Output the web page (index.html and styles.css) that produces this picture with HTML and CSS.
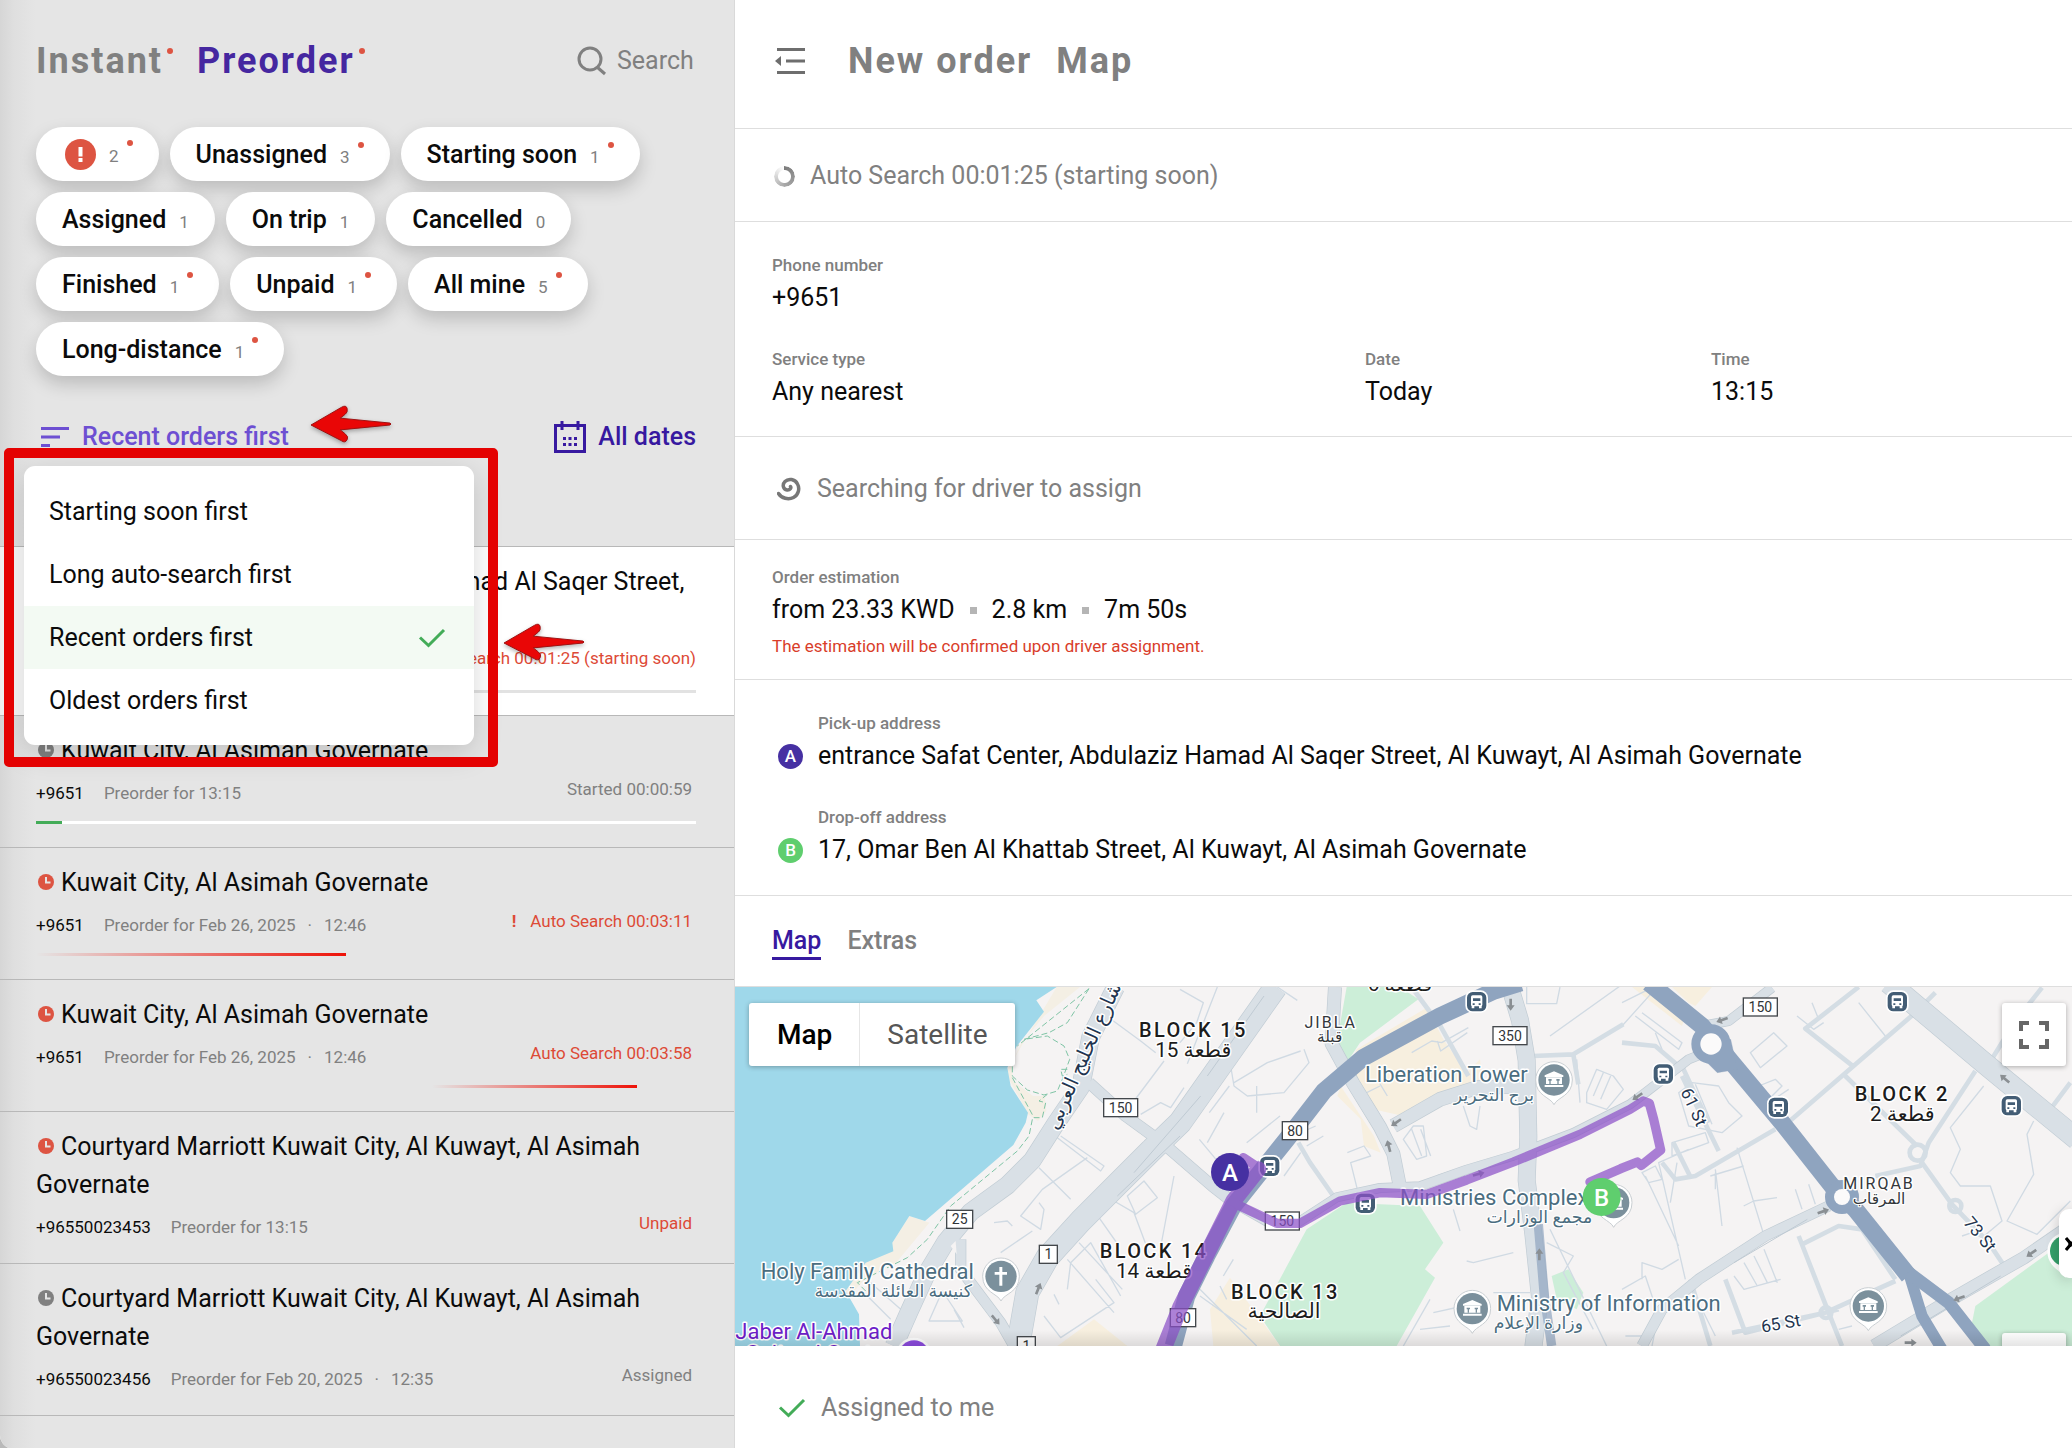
FILE: index.html
```html
<!DOCTYPE html>
<html lang="en">
<head>
<meta charset="utf-8">
<meta name="viewport" content="width=device-width, initial-scale=1">
<title>Preorder dispatch</title>
<link rel="stylesheet" href="styles.css">
</head>
<body>
<svg class="defs" width="0" height="0" aria-hidden="true">
  <symbol id="clock" viewBox="0 0 18 18">
    <circle cx="9" cy="9" r="8" fill="currentColor"/>
    <path d="M9 4v5.5h4.5" fill="none" stroke="#e5e5e5" stroke-width="2"/>
  </symbol>
  <symbol id="check" viewBox="0 0 28 20">
    <path d="M2 9.500l8.500 8L26 2" fill="none" stroke="#43ac58" stroke-width="3"/>
  </symbol>
  <symbol id="arrow" viewBox="0 0 82 40">
    <path d="M0 20L31 2q5-3 6 1 1 4-2 6l-5 4 51 5q2 1 0 2l-51 5 5 4q4 3 2 6-2 4-6 1z" fill="#e90606" stroke="#9c1010" stroke-width="1"/>
  </symbol>
  <symbol id="bus" viewBox="-36 -36 72 72">
    <rect x="-34" y="-34" width="68" height="68" rx="22" fill="#fff"/>
    <rect x="-29" y="-29" width="58" height="58" rx="17" fill="#435d75"/>
    <rect x="-17" y="-19" width="34" height="33" rx="5" fill="#fff"/>
    <path d="M-11-10h22v8h-22zM-12 5h6v5h-6zM6 5h6v5H6z" fill="#435d75"/>
    <path d="M-15 12h8v8h-8zM7 12h8v8H7z" fill="#fff"/>
  </symbol>
  <symbol id="pin" viewBox="-58 -58 116 136">
    <path d="M0 74C-9 52-55 48-55 0a55 55 0 01110 0C55 48 9 52 0 74z" fill="#fff" stroke="#c9ced2" stroke-width="3"/>
    <circle r="47" fill="#7b909c"/>
  </symbol>
  <symbol id="hall" viewBox="-32 -32 64 64">
    <path d="M0-26l28 12v5h-56v-5zM-24-8h48v20h-48zM-28 15h56v6h-56z" fill="#fff"/>
    <path d="M-17-3h10v5h-3v10h-4V2h-3zM7-3h10v5h-3v10h-4V2H7z" fill="#7b909c"/>
  </symbol>
  <symbol id="oneway" viewBox="-20 -20 40 40">
    <path d="M-18-4H2v-8L18 0 2 12V4h-20z" fill="#8a8f93"/>
  </symbol>
</svg>

<div class="app">
  <aside class="sidebar">
    <header class="side-head">
      <nav class="heading-tabs">
        <a class="heading" href="#instant">Instant</a><i class="dot"></i>
        <a class="heading active" href="#preorder">Preorder</a><i class="dot"></i>
      </nav>
      <label class="search">
        <svg width="30" height="30" viewBox="0 0 30 30" aria-hidden="true"><circle cx="13" cy="13" r="11" fill="none" stroke="#808080" stroke-width="3"/><path d="M20 21l8 7" stroke="#808080" stroke-width="3"/></svg>
        <input type="text" placeholder="Search" aria-label="Search">
      </label>
    </header>

    <div class="chips">
      <button class="chip alert"><svg width="31" height="31" viewBox="0 0 31 31" role="img" aria-label="Problems"><circle cx="15.500" cy="15.500" r="15.500" fill="#dd5442"/><path d="M13.500 8h4v9.500h-4zM13.500 19h4v4h-4z" fill="#fff"/></svg><small>2</small><i class="dot"></i></button>
      <button class="chip">Unassigned<small>3</small><i class="dot"></i></button>
      <button class="chip">Starting soon<small>1</small><i class="dot"></i></button>
      <button class="chip">Assigned<small>1</small></button>
      <button class="chip">On trip<small>1</small></button>
      <button class="chip">Cancelled<small>0</small></button>
      <button class="chip">Finished<small>1</small><i class="dot"></i></button>
      <button class="chip">Unpaid<small>1</small><i class="dot"></i></button>
      <button class="chip">All mine<small>5</small><i class="dot"></i></button>
      <button class="chip">Long-distance<small>1</small><i class="dot"></i></button>
    </div>

    <div class="sort-row">
      <button class="sort" aria-haspopup="listbox" aria-expanded="true">
        <svg width="28" height="20" viewBox="0 0 28 20" aria-hidden="true"><path d="M0 1.500h28M0 10h19M0 18.500h9" stroke="#6d4fd2" stroke-width="3"/></svg>
        Recent orders first
      </button>
      <button class="dates">
        <svg width="32" height="32" viewBox="0 0 32 32" aria-hidden="true"><rect x="1.500" y="4.500" width="29" height="26" fill="none" stroke="#3719a0" stroke-width="3"/><path d="M8 0v9M24 0v9" stroke="#3719a0" stroke-width="3"/><path d="M9 16h3v3H9zM14.500 16h3v3h-3zM20 16h3v3h-3zM9 22h3v3H9zM14.500 22h3v3h-3zM20 22h3v3h-3z" fill="#3719a0"/></svg>
        All dates
      </button>
      <div class="menu" role="listbox" aria-label="Sort orders">
        <button class="option" role="option">Starting soon first</button>
        <button class="option" role="option">Long auto-search first</button>
        <button class="option chosen" role="option" aria-selected="true">Recent orders first<svg width="28" height="20" aria-hidden="true"><use href="#check"/></svg></button>
        <button class="option" role="option">Oldest orders first</button>
      </div>
      <div class="callout-box"></div>
      <svg class="callout-arrow to-sort" width="80" height="40" aria-hidden="true"><use href="#arrow"/></svg>
      <svg class="callout-arrow to-menu" width="80" height="40" aria-hidden="true"><use href="#arrow"/></svg>
    </div>

    <ul class="orders">
      <li class="order current">
        <h3 class="order-title"><svg class="clock" width="18" height="18"><use href="#clock"/></svg>entrance Safat Center, Abdulaziz Hamad Al Saqer Street, Al Kuwayt, Al Asimah Governate</h3>
        <div class="meta"><b>+9651</b><span>Preorder for 13:15</span><em class="status late flush">Auto Search 00:01:25 (starting soon)</em></div>
        <div class="bar"></div>
      </li>
      <li class="order">
        <h3 class="order-title"><svg class="clock" width="18" height="18"><use href="#clock"/></svg>Kuwait City, Al Asimah Governate</h3>
        <div class="meta"><b>+9651</b><span>Preorder for 13:15</span><em class="status">Started 00:00:59</em></div>
        <div class="bar light"><div class="fill" style="width:4%"></div></div>
      </li>
      <li class="order">
        <h3 class="order-title"><svg class="clock late" width="18" height="18"><use href="#clock"/></svg>Kuwait City, Al Asimah Governate</h3>
        <div class="meta"><b>+9651</b><span class="when"><span>Preorder for Feb 26, 2025</span><span>·</span><span>12:46</span></span><em class="status late"><strong>!</strong>Auto Search 00:03:11</em></div>
        <div class="bar clear"><div class="sweep" style="width:47%"></div></div>
      </li>
      <li class="order">
        <h3 class="order-title"><svg class="clock late" width="18" height="18"><use href="#clock"/></svg>Kuwait City, Al Asimah Governate</h3>
        <div class="meta"><b>+9651</b><span class="when"><span>Preorder for Feb 26, 2025</span><span>·</span><span>12:46</span></span><em class="status late">Auto Search 00:03:58</em></div>
        <div class="bar clear"><div class="sweep" style="width:31%;margin-left:60%"></div></div>
      </li>
      <li class="order">
        <h3 class="order-title"><svg class="clock late" width="18" height="18"><use href="#clock"/></svg>Courtyard Marriott Kuwait City, Al Kuwayt, Al Asimah Governate</h3>
        <div class="meta"><b>+96550023453</b><span>Preorder for 13:15</span><em class="status late">Unpaid</em></div>
      </li>
      <li class="order">
        <h3 class="order-title"><svg class="clock" width="18" height="18"><use href="#clock"/></svg>Courtyard Marriott Kuwait City, Al Kuwayt, Al Asimah Governate</h3>
        <div class="meta"><b>+96550023456</b><span class="when"><span>Preorder for Feb 20, 2025</span><span>·</span><span>12:35</span></span><em class="status">Assigned</em></div>
      </li>
    </ul>
  </aside>

  <main class="detail">
    <header class="detail-head">
      <button class="collapse" aria-label="Collapse panel"><svg width="30" height="26" viewBox="0 0 30 26"><path d="M2 1.500h28M11 13h19M2 24.500h28" stroke="#6e6e6e" stroke-width="3"/><path d="M0 13l6-5v10z" fill="#6e6e6e"/></svg></button>
      <nav class="detail-tabs">
        <a class="heading" href="#new-order">New order</a>
        <a class="heading" href="#map-view">Map</a>
      </nav>
    </header>

    <section class="notice">
      <span class="spinner"></span>
      Auto Search 00:01:25 (starting soon)
    </section>

    <section class="fields">
      <dl class="field wide"><dt>Phone number</dt><dd>+9651</dd></dl>
      <dl class="field"><dt>Service type</dt><dd>Any nearest</dd></dl>
      <dl class="field"><dt>Date</dt><dd>Today</dd></dl>
      <dl class="field"><dt>Time</dt><dd>13:15</dd></dl>
    </section>

    <section class="searching">
      <svg width="24" height="24" viewBox="0 0 24 24" aria-hidden="true"><path d="M1.500 16.500c3 5 10 6.500 15 4 5-2.500 6.500-9 4-13.500-2.500-5-9-6-12.500-2.500-3 3-2 8 2 8.500 3 .4 4.500-2 3.500-3.500" fill="none" stroke="#777" stroke-width="3.500" stroke-linecap="round"/></svg>
      Searching for driver to assign
    </section>

    <section class="estimate">
      <h4 class="label">Order estimation</h4>
      <p class="facts"><span>from 23.33 KWD</span><i class="square"></i><span>2.8 km</span><i class="square"></i><span>7m 50s</span></p>
      <p class="note">The estimation will be confirmed upon driver assignment.</p>
    </section>

    <section class="stops">
      <div class="stop"><h4 class="label">Pick-up address</h4><span class="badge a">A</span><p>entrance Safat Center, Abdulaziz Hamad Al Saqer Street, Al Kuwayt, Al Asimah Governate</p></div>
      <div class="stop"><h4 class="label">Drop-off address</h4><span class="badge b">B</span><p>17, Omar Ben Al Khattab Street, Al Kuwayt, Al Asimah Governate</p></div>
    </section>

    <nav class="tabs">
      <a class="tab on" href="#map">Map</a>
      <a class="tab" href="#extras">Extras</a>
    </nav>

    <section class="map" id="map">
      <svg class="canvas" viewBox="0 0 4011 1077" preserveAspectRatio="xMidYMid slice" role="img" aria-label="Route map">
        <rect width="4011" height="1077" fill="#f5f3f3"/>
        <g transform="translate(-3 -33)">
          <!-- water and sand -->
          <path class="sand" d="M968 33h70L930 120 860 205l-28 60 5 50 60 45 35 0 5 45-25 30-30-20L815 290zM475 800l51-80 60 20-100 120-90 45-40 45-40 10 20-70z"/>
          <path class="water" d="M0 33H968L907 73 930 107 847 212 820 275 830 330 882 410 875 440 838 507 573 735 526 720 475 800 478 826 395 860 335 945 375 1015 378 1110H0z"/>
          <!-- blocks -->
          <path class="park" d="M1838 33h160l55 37-175 130-40 60-30-60 20-110zM1718 760l120-80 220 10 70 110-55 80 30 25-115 205h-350l-60-90 70-130zM4014 790l-70 40-220 160-10 50 50 70h250zM2453 900l50-20 45 70-20 50-60-30z"/>
          <path class="beige" d="M1868 220l210-125 50 95 70 100 40-40 10 80-150 40-110 100 20-50-90-20-80-100zM1820 330l100 150 20 50-50-20-10-80-70-70zM1438 1110l-10-110 60-95 150 205zM2694 33h45l115 87-10 30zM2814 33h120l-50 57-20-10zM970 1110l110-80 100 80z"/>
          <!-- minor streets -->
          <g class="lane">
            <path d="M980 480l130 90-10 15-130-100M915 575l95 95M1060 545L925 640 860 720l60 40 10-60-15-20M780 740l40-5 15 15M800 830l95-65M1125 125l95 70 45 35M1290 255l-90 120M1320 600l-45 240M1180 660l50-45 40 50-65 50zM1140 675l60 35 45 120M1095 725l60 85M1035 800l130 140M1000 850l140 160M930 1020l50 65 160-105-55-70M960 955l15 30M585 1035h100l-60-90zM660 1000l30 55M400 960l70 70M410 920l90 80M1220 415l60-35 30 15 40-60M1000 940l10-80 60-60 90 160"/>
            <path d="M1338 40l70 40-20 60-50 60M1450 33l-90 230M1630 33l60 40M1710 220l15 40-75 90-110 10-40-30-10-60M1500 320l100-60 100-35M1426 410l60-80M1568 330v80M1470 410l-50 90M1396 490l50 60M1538 500l100-80M1718 510l50-30M1650 600l50-70M1840 530l50-20 20 30-60 20 20 80M1700 470l45-20"/>
            <path d="M2033 230l60-35 30 5 80-45M2110 195l10 30 80-55M1898 350l40-20M1930 310l30 50M2008 490l30-40h30l10 90-30 10zM2033 460l30 80M2060 460l30 80M2108 600l60-20 30 5M2188 390l20 60 20 10 10-70M2378 33v50h90l10-50M2448 180l210-150M2528 250l10 130M2558 350l30-70 50 20 30 40-50 60-60-20zM2578 360l30-70M2600 370l30-70M2338 830l-120 30-20-5M2158 700l20 65M2088 970l-80 140M2098 1010l90-20M2058 1060l90-10M2278 950h110M2438 800l80 40-30 50 90 170M2448 760l170 350M1468 900l30-50M1458 930l20 40M1388 930l180 180M1398 960l140 100"/>
            <path d="M2664 80l80-40M2664 150l90-100M2724 110l120 90-10 20-130-100M2764 170l20 50M2834 350l40-30 80 10 30 50 40 40-60 50-100-20zM2854 330l60 120M2884 325l50 120M2814 500l100-30 10 30-110 40zM2724 590l40-20 20 40-40 10zM2734 600l100 210M2829 560l-20 120M2864 520l-90 40 80 350M2944 580l20 170M3009 515l80 260M2929 600l100-30M2944 590v50M3184 640l20 60M3224 625l20 60M3029 690l30-15 70-10M3049 230l70-60 40 40-80 65zM3074 330l50-20 20 20-60 60M3164 340l-60 40M3189 120l50 40 30-20M3234 80l20 50M3374 80l80 100M3749 330l-100 125 30 65-30 70 30 40h90l35 105-60 50-30-15-30 10M3899 435l-20 40 20 120-80 140 90 40 100-100M3000 900l30 40 110-30M3030 860l40 70M3060 840l40 80M3090 820l40 100M2724 910v-50l60 20 50-30M2664 940l70-40 30 90M2884 960l60 120M3314 1060l40-10M2764 1060l-10 50M2674 1080h80"/>
          </g>
          <g class="street">
            <path d="M1693 500l35 60 70 100M2108 130l95 170M2033 33l55 75M2398 240l120-5 150-90M2518 235l15 90M2818 500l50 100M2844 270l80 170"/>
            <path d="M2784 560l40 50 60-10 240-140M2844 300l110 225M3144 455l400-345 60-60M3374 33l-160 125 140 110M3334 300l215 210M3724 285l-140 215-25 70-135 30M3564 560l90 125 110 115 50 75M3764 265l80-130 80-100M3949 400l60-80M3194 780l90 230 40 100M2994 1070l280-60 210-95M3204 805l110-55 70 10 100 150M2664 200l100 10 70 60M2869 910l60 200M2974 910l60 160 280-70"/>
            <circle cx="3551" cy="530" r="24"/><circle cx="3664" cy="690" r="18"/><circle cx="3276" cy="1010" r="16"/>
          </g>
          <g class="road-edge">
            <path d="M1145 33l-75 150-30 150-75 110-70 110-75 75-110 80-75 90-60 100-50 110-45 102" stroke-width="56"/>
            <path d="M680 790v90l120 160 40 70" stroke-width="34"/>
            <path d="M1625 33L1338 440 1250 525 1150 625 1040 735 940 845 880 950 852 1110" stroke-width="72"/>
            <path d="M1065 320l110 100 110 80 150 130 70 55" stroke-width="36"/>
            <path d="M1803 33l-10 170 65 120 80 130 40 80 20 100" stroke-width="42"/>
            <path d="M1978 450l140-80 110-35 150-5" stroke-width="44"/>
            <path d="M2328 33l30 100 20 120 5 230-5 130 20 160 20 190-20 150" stroke-width="54"/>
            <path d="M1498 680l110 62h80l120-78 130-28 120-5 140-50 140-42 180-68 170-86 46-35 130-100 50-20" stroke-width="30"/>
            <path d="M2904 150l80-15 130-100" stroke-width="30"/>
            <path d="M3464 20l285 240 280 230" stroke-width="66"/>
            <path d="M4030 735l-160 110-210 120-240 145" stroke-width="40"/>
            <path d="M3284 690l-190 90-200 130-110 90-60 110" stroke-width="34"/>
          </g>
          <g class="road">
            <path d="M1145 33l-75 150-30 150-75 110-70 110-75 75-110 80-75 90-60 100-50 110-45 102" stroke-width="52"/>
            <path d="M680 790v90l120 160 40 70" stroke-width="30"/>
            <path d="M1625 33L1338 440 1250 525 1150 625 1040 735 940 845 880 950 852 1110" stroke-width="68"/>
            <path d="M1065 320l110 100 110 80 150 130 70 55" stroke-width="32"/>
            <path d="M1803 33l-10 170 65 120 80 130 40 80 20 100" stroke-width="38"/>
            <path d="M1978 450l140-80 110-35 150-5" stroke-width="40"/>
            <path d="M2328 33l30 100 20 120 5 230-5 130 20 160 20 190-20 150" stroke-width="50"/>
            <path d="M1498 680l110 62h80l120-78 130-28 120-5 140-50 140-42 180-68 170-86 46-35 130-100 50-20" stroke-width="26"/>
            <path d="M2904 150l80-15 130-100" stroke-width="26"/>
            <path d="M3464 20l285 240 280 230" stroke-width="62"/>
            <path d="M4030 735l-160 110-210 120-240 145" stroke-width="36"/>
            <path d="M3284 690l-190 90-200 130-110 90-60 110" stroke-width="30"/>
          </g>
          <path d="M1150 660L1338 480M1200 590l200-230M1420 300l170-240M3000 860l220-130M3500 1080l300-180" fill="none" stroke="#bfcad3" stroke-width="3"/>
          <path d="M665 795l-15 15 18 25zM1220 475l-10 25 20-5zM1300 540l-15 15 30-3z" fill="#f5f3f3"/>
          <!-- highways -->
          <g class="highway">
            <path d="M2360 20l-80 25-162 75-230 125-118 100-112 145-80 100-80 100-80 150-60 120-40 150" stroke-width="52"/>
            <path d="M2413 745l18 215 22 150" stroke-width="28" opacity=".7"/>
            <path d="M2744 20l160 130 90 110 150 180 150 190 70 70 160 200" stroke-width="52"/>
            <path d="M3524 890l40 130 60 100" stroke-width="34"/>
            <path d="M3524 890l120 90 110 140" stroke-width="38"/>
            <circle cx="2931" cy="204" r="44" stroke-width="30"/>
            <path d="M2890 230l60 60 60-10-20-90z"/>
            <circle cx="3324" cy="663" r="37" stroke-width="28"/>
          </g>
          <circle cx="2931" cy="204" r="32" fill="#fbfafa"/><circle cx="3324" cy="663" r="24" fill="#fbfafa"/>
          <!-- walking paths -->
          <path d="M1065 38L850 210M1065 38l-65 102-55 30-75 20 70-10 50 30 17 40-22 60-15 35-40 12-50-15-45-42v-40M835 305l65 120 25 0 10-45-20-5 25-20M895 430l-10 50-35 45-200 165-70 100-60 55-80 40-70 35 30 30M1000 280l-20 0 5 20 15-5" fill="none" stroke="#7fc4a5" stroke-width="3" stroke-dasharray="18 9"/>

          <g class="bus">
            <use href="#bus" x="2192" y="41" width="72" height="72"/>
            <use href="#bus" x="1571" y="535" width="72" height="72"/>
            <use href="#bus" x="1858" y="646" width="72" height="72"/>
            <use href="#bus" x="2752" y="258" width="72" height="72"/>
            <use href="#bus" x="3097" y="358" width="72" height="72"/>
            <use href="#bus" x="3454" y="41" width="72" height="72"/>
            <use href="#bus" x="3796" y="353" width="72" height="72"/>
          </g>
          <g>
            <use href="#oneway" x="-20" y="-20" width="40" height="40" transform="translate(913 938) rotate(-68)"/>
            <use href="#oneway" x="-20" y="-20" width="40" height="40" transform="translate(785 1032) rotate(50)"/>
            <use href="#oneway" x="-20" y="-20" width="40" height="40" transform="translate(2330 86) rotate(90)"/>
            <use href="#oneway" x="-20" y="-20" width="40" height="40" transform="translate(1986 440) rotate(145)"/>
            <use href="#oneway" x="-20" y="-20" width="40" height="40" transform="translate(1964 510) rotate(-105)"/>
            <use href="#oneway" x="-20" y="-20" width="40" height="40" transform="translate(2234 594) rotate(-15)"/>
            <use href="#oneway" x="-20" y="-20" width="40" height="40" transform="translate(2416 835) rotate(-90)"/>
            <use href="#oneway" x="-20" y="-20" width="40" height="40" transform="translate(2964 132) rotate(160)"/>
            <use href="#oneway" x="-20" y="-20" width="40" height="40" transform="translate(2710 362) rotate(145)"/>
            <use href="#oneway" x="-20" y="-20" width="40" height="40" transform="translate(3812 308) rotate(-140)"/>
            <use href="#oneway" x="-20" y="-20" width="40" height="40" transform="translate(3268 706) rotate(-18)"/>
            <use href="#oneway" x="-20" y="-20" width="40" height="40" transform="translate(3892 832) rotate(145)"/>
            <use href="#oneway" x="-20" y="-20" width="40" height="40" transform="translate(3675 967) rotate(160)"/>
            <use href="#oneway" x="-20" y="-20" width="40" height="40" transform="translate(3530 1100)"/>
          </g>

          <!-- road shields -->
          <g class="shield">
            <rect x="1109" y="368" width="102" height="54"/><text x="1160" y="410">150</text>
            <rect x="638" y="703" width="78" height="54"/><text x="677" y="745">25</text>
            <rect x="916" y="808" width="54" height="54"/><text x="943" y="850">1</text>
            <rect x="850" y="1082" width="54" height="54"/><text x="877" y="1124">1</text>
            <rect x="1645" y="437" width="76" height="54"/><text x="1683" y="479">80</text>
            <rect x="1594" y="708" width="102" height="54"/><text x="1645" y="750">150</text>
            <rect x="1309" y="998" width="76" height="54"/><text x="1347" y="1040">80</text>
            <rect x="2277" y="152" width="102" height="54"/><text x="2328" y="194">350</text>
            <rect x="3028" y="66" width="102" height="54"/><text x="3079" y="108">150</text>
          </g>

          <!-- place pins -->
          <use href="#pin" x="743" y="843" width="116" height="136"/>
          <path d="M796 873h9v15h14v8h-14v33h-9v-33h-14v-8h14z" fill="#fff"/>
          <use href="#pin" x="2402" y="254" width="116" height="136"/><use href="#hall" x="2428" y="280" width="64" height="64"/>
          <use href="#pin" x="2157" y="940" width="116" height="136"/><use href="#hall" x="2183" y="966" width="64" height="64"/>
          <use href="#pin" x="2581" y="622" width="116" height="136"/><use href="#hall" x="2607" y="648" width="64" height="64"/>
          <use href="#pin" x="3345" y="932" width="116" height="136"/><use href="#hall" x="3371" y="958" width="64" height="64"/>
          <path d="M3994 905c-10-20-54-30-54-80a54 54 0 01108 0c0 50-45 60-54 80z" fill="#fff"/><circle cx="3994" cy="825" r="46" fill="#35a06b"/>
          <circle cx="540" cy="1140" r="55" fill="#fff"/><circle cx="540" cy="1140" r="47" fill="#8d4ce0"/>

          <!-- labels -->
          <g class="poi">
            <text x="80" y="908">Holy Family Cathedral</text>
            <text x="1893" y="319">Liberation Tower</text>
            <text x="1998" y="687">Ministries Complex</text>
            <text x="2288" y="1004">Ministry of Information</text>
            <text class="ar" x="478" y="963">كنيسة العائلة المقدسة</text>
            <text class="ar" x="2280" y="375">برج التحرير</text>
            <text class="ar" x="2416" y="742">مجمع الوزارات</text>
            <text class="ar" x="2413" y="1058">وزارة الإعلام</text>
          </g>
          <g class="culture"><text x="4" y="1089">Jaber Al-Ahmad</text><text x="34" y="1154">Cultural Centre</text></g>
          <g class="block">
            <text x="1378" y="182">BLOCK 15</text><text class="ar" x="1378" y="244">قطعة 15</text>
            <text x="1260" y="846">BLOCK 14</text><text class="ar" x="1260" y="907">قطعة 14</text>
            <text x="1654" y="968">BLOCK 13</text><text class="ar" x="1650" y="1026">الصالحية</text>
            <text x="3505" y="376">BLOCK 2</text><text class="ar" x="3505" y="436">قطعة 2</text>
            <text class="ar" x="1998" y="44">قطعة 6</text>
          </g>
          <g class="area">
            <text x="1790" y="155">JIBLA</text><text class="ar" x="1787" y="198">قبلة</text>
            <text x="3435" y="638">MIRQAB</text><text class="ar" x="3435" y="684">المرقاب</text>
          </g>
          <g class="street-name">
            <text transform="translate(2880 393) rotate(65)" dy="18">61 St</text>
            <text transform="translate(3738 775) rotate(50)" dy="18">73 St</text>
            <text transform="translate(3140 1042) rotate(-10)" dy="18">65 St</text>
            <text class="ar" transform="translate(1050 240) rotate(-66)" dy="18">شارع الخليج العربي</text>
          </g>

          <!-- route -->
          <g fill="none" stroke="#8c50c8" stroke-linejoin="round" stroke-linecap="round" opacity=".72">
            <path d="M1573 580l-75 95-160 320-50 125" stroke-width="48"/>
            <path d="M1528 545L1573 575 1498 675 1518 690 1628 742 1698 742 1818 675 1938 650 2078 655 2198 612 2338 558 2538 475 2688 400 2728 375 2746 382 2759 430 2780 522 2722 568 2710 558 2660 578 2568 618" stroke-width="28"/>
          </g>
          <g class="marker">
            <circle cx="1488" cy="588" r="57" fill="#4630a2"/><text x="1488" y="614">A</text>
            <circle cx="2603" cy="663" r="57" fill="#5fce6e"/><text x="2603" y="689">B</text>
          </g>
        </g>
      </svg>
      <div class="map-type">
        <button class="type on">Map</button>
        <button class="type">Satellite</button>
      </div>
      <button class="full" aria-label="Toggle fullscreen"><svg width="30" height="28" viewBox="0 0 30 28"><path d="M2 10V2h8M20 2h8v8M28 18v8h-8M10 26H2v-8" fill="none" stroke="#666" stroke-width="4"/></svg></button>
      <button class="drawer" aria-label="Open drawer"><svg width="7" height="14" viewBox="0 0 7 14"><path d="M1 1l5 6-5 6M7 5L5 7l2 2" fill="none" stroke="#000" stroke-width="3"/></svg></button>
      <button class="zoom" aria-label="Zoom in"></button>
    </section>

    <footer class="assignee">
      <svg width="28" height="20" aria-hidden="true"><use href="#check"/></svg>
      Assigned to me
    </footer>
  </main>
</div>
</body>
</html>
```
FILE: styles.css
```css
* { box-sizing: border-box; }
body {
  margin: 0;
  background: #b9b9b9;
  color: #0b0b0b;
  font: 400 25px/32px Roboto, "Liberation Sans", sans-serif;
}
h3, h4, p, dl, dd, ul { margin: 0; padding: 0; }
button, input { font: inherit; color: inherit; border: 0; background: none; padding: 0; }
button { cursor: pointer; }
a { color: inherit; text-decoration: none; }
em, i { font-style: normal; }
svg { flex: none; }
.defs { position: absolute; }

.app {
  display: grid;
  grid-template-columns: 735fr 1337fr;
  min-height: 100vh;
  border-bottom-left-radius: 14px;
  overflow: hidden;
  background: #fff;
}

/* Sidebar */
.sidebar {
  min-width: 0;
  border-right: 1px solid #d9d9d9;
  background: linear-gradient(90deg, #d6d6d6, #dfdfdf 14px, #e5e5e5 36px);
}
.side-head {
  display: flex;
  justify-content: space-between;
  align-items: center;
  padding: 39px 38px 0 36px;
}
.heading-tabs { display: flex; align-items: flex-start; }
.heading { font-size: 36px; line-height: 44px; font-weight: 700; letter-spacing: 2px; color: #808080; }
.heading.active { color: #4527a0; }
.dot { flex: none; width: 6px; height: 6px; border-radius: 50%; background: #dd5442; }
.heading-tabs .dot { margin: 9px 24px 0 4px; }
.search { display: flex; align-items: center; gap: 10px; }
.search input { width: 79px; height: 32px; outline: 0; }
.search input::placeholder { color: #808080; opacity: 1; }

.chips { display: flex; flex-wrap: wrap; gap: 11px; padding: 44px 38px 40px 36px; }
.chip {
  display: flex;
  align-items: center;
  height: 54px;
  padding: 2px 26px 0;
  border-radius: 27px;
  background: #fff;
  box-shadow: 0 8px 18px rgba(0, 0, 0, .18);
  font-weight: 500;
}
.chip.alert { padding: 0 26px 0 29px; }
.chip small { margin: 4px 0 0 13px; font-size: 17px; line-height: 24px; font-weight: 400; color: #808080; }
.chip .dot { align-self: flex-start; margin: 13px 0 0 8px; }

.sort-row {
  position: relative;
  display: flex;
  justify-content: space-between;
  align-items: center;
  height: 40px;
  margin: 0 38px 90px 36px;
  padding-top: 1px;
  font-weight: 500;
}
.sort { display: flex; align-items: center; gap: 13px; padding-left: 5px; color: #6d4fd2; }
.dates { display: flex; align-items: center; gap: 12px; color: #3719a0; }
.menu {
  position: absolute;
  z-index: 2;
  top: 50px;
  left: -12px;
  width: 450px;
  padding: 14px 0 13px;
  border-radius: 11px;
  background: #fff;
  box-shadow: 0 8px 30px rgba(0, 0, 0, .16);
}
.option {
  display: flex;
  justify-content: space-between;
  align-items: center;
  width: 100%;
  height: 63px;
  padding: 0 28px 0 25px;
  font-weight: 400;
  text-align: left;
}
.option.chosen { background: #f3faf3; }
.callout-box {
  position: absolute;
  z-index: 3;
  top: 32px;
  left: -32px;
  width: 494px;
  height: 319px;
  border: 10px solid #e40202;
  border-radius: 5px;
  pointer-events: none;
}
.callout-arrow { position: absolute; z-index: 4; filter: drop-shadow(0 2px 2px rgba(0, 0, 0, .3)); }
.to-sort { top: -11px; left: 275px; }
.to-menu { top: 207px; left: 468px; }

.orders { list-style: none; border-top: 1px solid #b8b8b8; }
.order { padding: 16px 38px 23px 36px; border-bottom: 1px solid #b8b8b8; }
.order.current { padding-bottom: 22px; background: linear-gradient(90deg, #f0f0f0, #fff 30px); }
.order-title { font-size: 25px; line-height: 38px; font-weight: 400; }
.clock { margin: 0 6px 0 1px; color: #808080; }
.clock.late { color: #dd5442; }
.meta { display: flex; align-items: flex-start; gap: 20px; margin-top: 10px; font-size: 17px; line-height: 26px; color: #808080; }
.meta b { font-weight: 400; color: #0b0b0b; }
.when { display: flex; gap: 12px; }
.status { display: flex; gap: 14px; margin: 0 4px 0 auto; line-height: 18px; }
.status.flush { margin-right: 0; }
.status.late { color: #dd4a36; }
.bar { height: 3px; margin-top: 15px; background: #e2e2e2; }
.bar.light { background: #fff; }
.bar.clear { background: none; }
.fill { height: 3px; background: #43ac58; }
.sweep { height: 3px; background: linear-gradient(90deg, rgba(240, 20, 10, 0), #ee1208); }

/* Order detail */
.detail { display: flex; flex-direction: column; min-width: 0; }
.detail > * { border-bottom: 1px solid #dedede; }
.detail-head { display: flex; align-items: center; padding: 39px 37px 45px 40px; }
.collapse { display: flex; }
.detail-tabs { display: flex; gap: 24px; padding-left: 43px; }
.notice { display: flex; align-items: center; gap: 15px; padding: 31px 37px 29px 39px; color: #808080; }
.spinner {
  width: 21px;
  height: 21px;
  border-radius: 50%;
  background: conic-gradient(#7c7c7c, #a8a8a8 50%, #f2f2f2 90%, #fff);
  -webkit-mask: radial-gradient(circle, transparent 6px, #000 7px);
  mask: radial-gradient(circle, transparent 6px, #000 7px);
}
.fields {
  display: grid;
  grid-template-columns: 593fr 346fr 324fr;
  row-gap: 33px;
  padding: 31px 37px 28px;
}
.field.wide { grid-column: 1 / -1; }
.field dt, .label { margin-bottom: 5px; font-size: 17px; line-height: 24px; font-weight: 500; color: #808080; }
.searching { display: flex; align-items: center; gap: 16px; padding: 36px 37px 34px 42px; color: #808080; }
.estimate { padding: 25px 37px 21px; }
.facts { display: flex; align-items: center; gap: 15px; }
.square { width: 7px; height: 7px; background: #b5b5b5; }
.note { margin-top: 8px; font-size: 17px; line-height: 24px; color: #d93d2a; }
.stops { display: grid; gap: 33px; padding: 31px 37px 29px 43px; }
.stop { display: grid; grid-template-columns: 25px 1fr; column-gap: 15px; align-items: center; }
.stop .label { grid-column: 2; }
.badge { width: 25px; height: 25px; border-radius: 50%; color: #fff; font-size: 17px; line-height: 25px; font-weight: 500; text-align: center; }
.badge.a { background: #4630a2; }
.badge.b { background: #5fce6e; }
.tabs { display: flex; gap: 26px; padding: 29px 37px 26px; font-weight: 500; color: #808080; }
.tab { border-bottom: 3px solid transparent; }
.tab.on { color: #3719a0; border-color: #3719a0; }

.map { position: relative; height: 359px; overflow: hidden; }
.map::after {
  content: "";
  position: absolute;
  inset: auto 0 0;
  height: 16px;
  background: linear-gradient(transparent, rgba(0, 0, 0, .1));
}
.canvas { display: block; width: 100%; height: 100%; font-family: Roboto, "DejaVu Sans", sans-serif; }
.canvas text { paint-order: stroke; }
.water { fill: #9fd8ea; }
.sand { fill: #f4efe4; }
.park { fill: #cceed8; }
.beige { fill: #f7efdf; }
.lane, .street, .road, .road-edge, .highway { fill: none; stroke-linejoin: round; }
.lane { stroke: #d0dae3; stroke-width: 4px; }
.street { stroke: #d4dde4; stroke-width: 14px; }
.road-edge { stroke: #c1ccd4; }
.road { stroke: #d9e0e6; }
.highway { stroke: #8fa4bf; }
.highway path:nth-of-type(6) { fill: #8fa4bf; }
.shield rect { fill: #fff; stroke: #43474b; stroke-width: 4px; }
.shield text { fill: #303438; font-size: 42px; text-anchor: middle; }
.poi { fill: #4b6d80; font-size: 66px; stroke: #fff; stroke-width: 9px; stroke-linejoin: round; }
.poi .ar { font-size: 52px; text-anchor: middle; }
.culture { fill: #6d20c8; font-size: 66px; stroke: #fff; stroke-width: 9px; stroke-linejoin: round; }
.block { fill: #1c1c1c; font-size: 60px; font-weight: 500; letter-spacing: 7px; text-anchor: middle; stroke: #fff; stroke-width: 9px; stroke-linejoin: round; }
.block .ar { font-size: 62px; font-weight: 400; letter-spacing: 0; }
.area { fill: #33373b; font-size: 48px; letter-spacing: 6px; text-anchor: middle; stroke: #fff; stroke-width: 9px; stroke-linejoin: round; }
.area .ar { font-size: 46px; letter-spacing: 0; }
.poi .ar, .area .ar { stroke-width: 7px; }
.street-name { fill: #1f3550; font-size: 52px; text-anchor: middle; stroke: #fff; stroke-width: 9px; stroke-linejoin: round; }
.street-name .ar { font-size: 60px; }
.marker { fill: #fff; font-size: 72px; font-weight: 500; text-anchor: middle; }

.map-type {
  position: absolute;
  top: 16px;
  left: 14px;
  display: flex;
  border-radius: 3px;
  background: #fff;
  box-shadow: 0 1px 5px rgba(0, 0, 0, .3);
  font-size: 28px;
}
.type { height: 63px; padding: 0 27px; color: #565656; }
.type.on { padding-left: 28px; font-weight: 500; color: #000; border-right: 1px solid #e6e6e6; }
.full, .zoom {
  position: absolute;
  right: 6px;
  width: 64px;
  height: 63px;
  border-radius: 3px;
  background: #fff;
  box-shadow: 0 1px 5px rgba(0, 0, 0, .3);
}
.full { top: 16px; display: grid; place-items: center; }
.zoom { top: 346px; }
.drawer {
  position: absolute;
  top: 222px;
  right: 0;
  display: flex;
  align-items: center;
  justify-content: flex-end;
  width: 13px;
  height: 69px;
  border-radius: 10px 0 0 10px;
  background: #fff;
  box-shadow: 0 2px 14px rgba(0, 0, 0, .2);
}
.assignee { display: flex; align-items: center; gap: 15px; padding: 46px 37px 25px 43px; color: #808080; }
.detail > .map, .detail > .assignee { border-bottom: 0; }
```
